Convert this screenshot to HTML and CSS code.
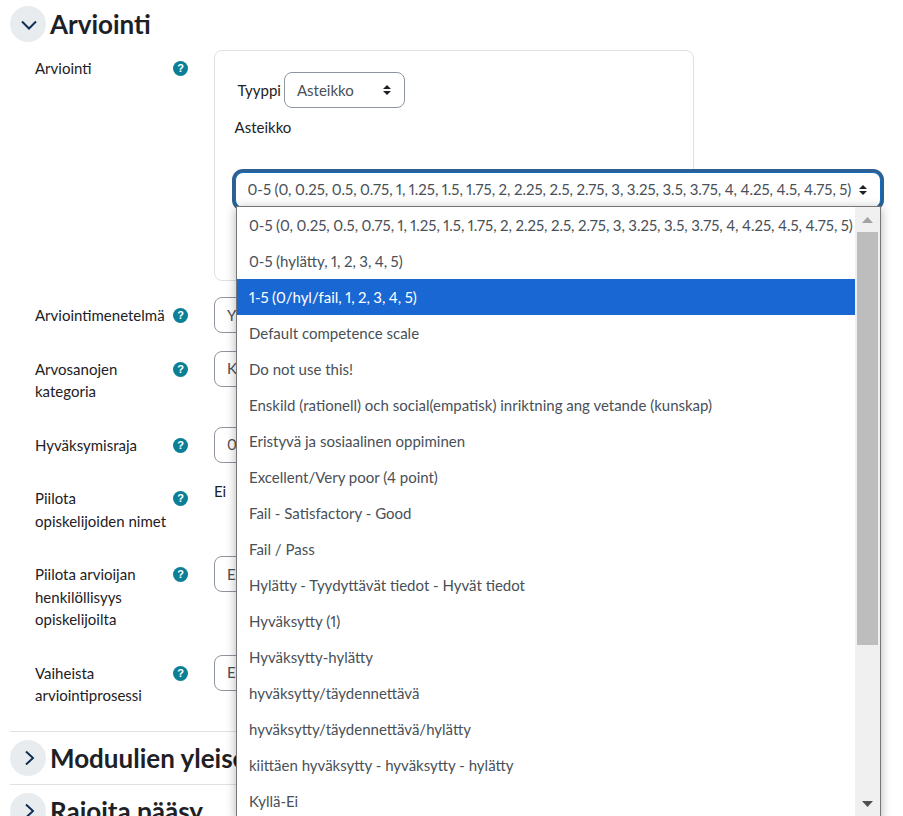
FILE: index.html
```html
<!DOCTYPE html>
<html lang="fi">

<head>
    <meta charset="UTF-8">
    <meta name="viewport" content="width=device-width, initial-scale=1.0">
    <title>Arviointi</title>
    <link rel="stylesheet" href="styles.css">
</head>

<body>
    <div class="section first">
        <div class="section-head">
            <span class="toggle">
                <svg class="chevron-down" width="16" height="10" viewBox="0 0 16 10"><polyline points="1,1 8,8 15,1" /></svg>
            </span>
            <h3>Arviointi</h3>
        </div>

        <div class="row">
            <div class="label"><span>Arviointi</span><i class="help">?</i></div>
            <div class="card">
                <div class="type-line">
                    <span class="type-label">Tyyppi</span>
                    <div class="select type-select">
                        <span>Asteikko</span>
                        <svg class="caret" width="10" height="12" viewBox="0 0 10 12"><path d="M5 1 9 5H1zM5 11 1 7h8z" /></svg>
                    </div>
                </div>
                <div class="scale-label">Asteikko</div>
                <div class="select scale-select">
                    <span class="num">0-5 (0, 0.25, 0.5, 0.75, 1, 1.25, 1.5, 1.75, 2, 2.25, 2.5, 2.75, 3, 3.25, 3.5, 3.75, 4, 4.25, 4.5, 4.75, 5)</span>
                    <svg class="caret" width="10" height="12" viewBox="0 0 10 12"><path d="M5 1 9 5H1zM5 11 1 7h8z" /></svg>
                </div>
            </div>
        </div>

        <div class="row">
            <div class="label"><span>Arviointimenetelmä</span><i class="help">?</i></div>
            <div class="select field"><span>Yksinkertainen</span></div>
        </div>

        <div class="row">
            <div class="label"><span>Arvosanojen<br>kategoria</span><i class="help">?</i></div>
            <div class="select field"><span>Kategorioimaton</span></div>
        </div>

        <div class="row">
            <div class="label"><span>Hyväksymisraja</span><i class="help">?</i></div>
            <div class="select field"><span>0</span></div>
        </div>

        <div class="row">
            <div class="label"><span>Piilota<br>opiskelijoiden nimet</span><i class="help">?</i></div>
            <div class="static">Ei</div>
        </div>

        <div class="row">
            <div class="label"><span>Piilota arvioijan<br>henkilöllisyys<br>opiskelijoilta</span><i class="help">?</i></div>
            <div class="select field"><span>Ei</span></div>
        </div>

        <div class="row">
            <div class="label"><span>Vaiheista<br>arviointiprosessi</span><i class="help">?</i></div>
            <div class="select field"><span>Ei</span></div>
        </div>
    </div>

    <div class="section">
        <div class="section-head">
            <span class="toggle">
                <svg class="chevron-right" width="10" height="16" viewBox="0 0 10 16"><polyline points="1.5,1.5 8.5,8 1.5,14.5" /></svg>
            </span>
            <h3>Moduulien yleiset</h3>
        </div>
    </div>

    <div class="section">
        <div class="section-head">
            <span class="toggle">
                <svg class="chevron-right" width="10" height="16" viewBox="0 0 10 16"><polyline points="1.5,1.5 8.5,8 1.5,14.5" /></svg>
            </span>
            <h3>Rajoita pääsy</h3>
        </div>
    </div>

    <!-- open list of the scale select -->
    <div class="dropdown">
        <ul class="options">
            <li class="num">0-5 (0, 0.25, 0.5, 0.75, 1, 1.25, 1.5, 1.75, 2, 2.25, 2.5, 2.75, 3, 3.25, 3.5, 3.75, 4, 4.25, 4.5, 4.75, 5)</li>
            <li class="num">0-5 (hylätty, 1, 2, 3, 4, 5)</li>
            <li class="num selected">1-5 (0/hyl/fail, 1, 2, 3, 4, 5)</li>
            <li>Default competence scale</li>
            <li>Do not use this!</li>
            <li>Enskild (rationell) och social(empatisk) inriktning ang vetande (kunskap)</li>
            <li>Eristyvä ja sosiaalinen oppiminen</li>
            <li>Excellent/Very poor (4 point)</li>
            <li>Fail - Satisfactory - Good</li>
            <li>Fail / Pass</li>
            <li>Hylätty - Tyydyttävät tiedot - Hyvät tiedot</li>
            <li>Hyväksytty (1)</li>
            <li>Hyväksytty-hylätty</li>
            <li>hyväksytty/täydennettävä</li>
            <li>hyväksytty/täydennettävä/hylätty</li>
            <li>kiittäen hyväksytty - hyväksytty - hylätty</li>
            <li>Kyllä-Ei</li>
        </ul>
        <div class="scrollbar">
            <svg class="arrow" width="11" height="6" viewBox="0 0 11 6"><path d="M5.5 0 11 6H0z" /></svg>
            <div class="track"><div class="thumb"></div></div>
            <svg class="arrow arrow-down" width="11" height="6" viewBox="0 0 11 6"><path d="M0 0h11L5.5 6z" /></svg>
        </div>
    </div>
</body>

</html>
```

FILE: styles.css
```css
html,
body {
    height: 816px;
    overflow: hidden;
}

body {
    margin: 0;
    position: relative;
    font-family: "Lato", sans-serif;
    font-size: 15px;
    line-height: 22.5px;
    font-variant-numeric: proportional-nums;
    color: #1d2125;
    background: white;
}

.num {
    word-spacing: -0.4px;
}

.section {
    width: 800px;
    margin-left: 10px;
    padding: 8px 0;
    border-top: 1px solid #dee2e6;
}

.section.first {
    padding: 6px 0 0;
    border-top: none;
}

.section-head {
    display: flex;
    align-items: center;
    gap: 4px;
    height: 36px;
    white-space: nowrap;
}

.section.first .section-head {
    margin-bottom: 8px;
}

.section-head h3 {
    margin: 0;
    font-size: 26px;
    line-height: 36px;
    font-weight: 700;
}

.toggle {
    display: flex;
    align-items: center;
    justify-content: center;
    width: 36px;
    height: 36px;
    border-radius: 50%;
    background: #e9ecef;
}

.toggle svg polyline {
    fill: none;
    stroke: #0f2f57;
    stroke-width: 2;
}

.chevron-down {
    transform: translate(1px, 1.5px);
}

.chevron-right {
    transform: translateX(1.5px);
}

.row {
    display: flex;
    align-items: flex-start;
    margin-bottom: 16px;
    padding-left: 25px;
}

.label {
    display: flex;
    justify-content: space-between;
    flex: none;
    width: 153px;
    margin-right: 26px;
    padding: 7px 0 8px;
}

.help {
    flex: none;
    width: 15px;
    height: 15px;
    margin-top: 4px;
    border-radius: 50%;
    background: #0a7f96;
    color: white;
    font-family: "Liberation Sans", sans-serif;
    font-size: 11px;
    font-style: normal;
    font-weight: 700;
    line-height: 15px;
    text-align: center;
}

.select {
    display: flex;
    align-items: center;
    justify-content: space-between;
    height: 36px;
    box-sizing: border-box;
    padding: 0 12px;
    border: 1px solid #8f959e;
    border-radius: 8px;
    color: #495057;
    background: white;
    white-space: nowrap;
}

.field {
    width: 200px;
}

.card {
    width: 480px;
    height: 231px;
    box-sizing: border-box;
    padding: 21px 20px 0 19.5px;
    border: 1px solid #dee2e6;
    border-radius: 8px;
}

.type-line {
    display: flex;
    align-items: center;
    gap: 3px;
    padding-left: 3px;
}

.type-select {
    width: 121px;
}

.scale-label {
    margin-top: 8px;
}

.scale-select {
    width: 646px;
    margin-top: 33px;
    border-color: #0f6cbf;
    box-shadow: 0 0 0 3px #2d5f92;
}

.caret path {
    fill: #1d2125;
}

.dropdown {
    position: absolute;
    left: 236px;
    top: 206px;
    display: flex;
    width: 645px;
    height: 612px;
    box-sizing: border-box;
    border: 1px solid #767676;
    background: white;
    box-shadow: 0 2px 10px rgba(0, 0, 0, 0.3);
}

.options {
    flex: 1;
    margin: 0;
    padding: 0;
    list-style: none;
    overflow: hidden;
    color: #495057;
}

.options li {
    height: 36px;
    padding-left: 12px;
    line-height: 36px;
    white-space: nowrap;
}

.options li.selected {
    color: white;
    background: #1967d2;
}

.scrollbar {
    flex: none;
    display: flex;
    flex-direction: column;
    align-items: center;
    width: 25px;
    background: #f0f0f0;
}

.arrow {
    flex: none;
    margin: 10px 0 9px;
}

.arrow path {
    fill: #a3a3a3;
}

.arrow-down {
    margin: 0 0 10px;
}

.arrow-down path {
    fill: #505050;
}

.track {
    flex: 1;
    width: 100%;
    padding: 0 2px;
    box-sizing: border-box;
}

.thumb {
    height: 413px;
    background: #bdbdbd;
}
```
